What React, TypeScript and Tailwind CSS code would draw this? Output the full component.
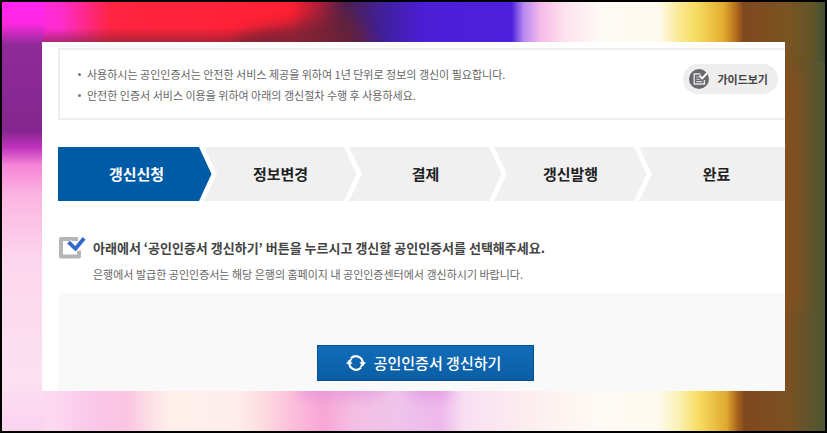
import clsx from 'clsx'
import type { ReactNode } from 'react'

const notices = [
  '사용하시는 공인인증서는 안전한 서비스 제공을 위하여 1년 단위로 정보의 갱신이 필요합니다.',
  '안전한 인증서 서비스 이용을 위하여 아래의 갱신절차 수행 후 사용하세요.',
]

const steps = [
  { label: '갱신신청', className: 'flex-159' },
  { label: '정보변경', className: 'flex-145' },
  { label: '결제', className: 'flex-145' },
  { label: '갱신발행', className: 'flex-145' },
  { label: '완료', className: 'flex-133' },
]

function Stops({ items }: { items: [number, string][] }) {
  return (
    <>
      {items.map(([at, color]) => (
        <stop key={at} offset={at / 827} stopColor={color} />
      ))}
    </>
  )
}

function Backdrop() {
  return (
    <svg className="absolute inset-0 h-full w-full" viewBox="0 0 827 433" preserveAspectRatio="none" aria-hidden="true">
      <defs>
        <linearGradient id="top">
          <Stops
            items={[
              [0, '#ff26f4'], [60, '#ff2ccc'], [110, '#ff2440'], [290, '#ff2032'], [320, '#a82038'], [345, '#4c2050'],
              [385, '#4020a0'], [425, '#4c1ed8'], [512, '#4c20dc'], [524, '#b888f0'], [542, '#f8bcea'], [566, '#fde2ee'],
              [600, '#fefaf5'], [660, '#fefaee'], [682, '#fae88c'], [700, '#f5d95a'], [725, '#e4ac30'], [738, '#b46c1c'],
              [745, '#80481e'], [790, '#7a5422'], [815, '#615528'], [827, '#405034'],
            ]}
          />
        </linearGradient>
        <linearGradient id="bottom">
          <Stops
            items={[
              [0, '#f9cfec'], [50, '#fcd9f1'], [90, '#fac8e8'], [125, '#fbc3e2'], [150, '#fde0e6'], [170, '#ffefeb'],
              [235, '#feeeeb'], [262, '#fddce0'], [290, '#fcc0da'], [322, '#f8a6d6'], [355, '#f4bfe4'], [400, '#eec4ec'],
              [440, '#edb8ec'], [465, '#f9dff2'], [530, '#fceeee'], [600, '#fefaf5'], [660, '#fefaee'], [680, '#faf0b4'],
              [700, '#f8dc62'], [728, '#e0a82e'], [739, '#a8641c'], [746, '#80481e'], [790, '#7c5022'], [827, '#4c5834'],
            ]}
          />
        </linearGradient>
        <linearGradient id="left" x1="0" y1="0" x2="0" y2="1">
          <stop offset="0" stopColor="#ff26f4" />
          <stop offset="0.05" stopColor="#fc28e0" />
          <stop offset="0.1" stopColor="#902a98" />
          <stop offset="0.3" stopColor="#85268e" />
          <stop offset="0.34" stopColor="#c034bc" />
          <stop offset="0.38" stopColor="#f684d6" />
          <stop offset="0.45" stopColor="#fcb4e2" />
          <stop offset="0.6" stopColor="#fcd6ec" />
          <stop offset="0.88" stopColor="#fde0f2" />
          <stop offset="1" stopColor="#fad2ee" />
        </linearGradient>
        <linearGradient id="dusk" x1="0" y1="0" x2="0" y2="1">
          <stop offset="0" stopColor="#742432" stopOpacity="0" />
          <stop offset="1" stopColor="#742432" stopOpacity="0.8" />
        </linearGradient>
        <filter id="soft" x="-50%" y="-100%" width="200%" height="300%">
          <feGaussianBlur stdDeviation="7" />
        </filter>
      </defs>
      <rect width="827" height="433" fill="url(#bottom)" />
      <rect width="827" height="60" fill="url(#top)" />
      <rect width="42" height="433" fill="url(#left)" />
      <path d="M42 26h310v20H42Z" fill="url(#dusk)" />
      <path d="M220 46 250 30 300 20 350 10 375 46Z" fill="#6a2434" opacity="0.7" filter="url(#soft)" />
      <path d="M785 70h22v240h-22Z" fill="#90501c" opacity="0.4" filter="url(#soft)" />
      <path d="M300 380h100l-30 20h-70ZM405 380h45v20h-40Z" fill="#e090dc" opacity="0.6" filter="url(#soft)" />
    </svg>
  )
}

function GuideIcon() {
  return (
    <svg width="20" height="20" viewBox="0 0 20 20" fill="none" aria-hidden="true">
      <circle cx="10" cy="10" r="10" fill="#68696d" />
      <path d="M11.5 5H5.2v10h10.2v-4" stroke="#e4e4e6" strokeWidth="1.4" />
      <path d="M7.2 8h3M7.2 10.3h4M7.2 12.6h6" stroke="#d4d4d6" strokeWidth="1.1" />
      <path d="m10.6 6.6 2.6 2.8 5-5.4" stroke="#fff" strokeWidth="1.9" />
    </svg>
  )
}

function CheckIcon() {
  return (
    <svg width="28" height="24" viewBox="0 0 28 24" fill="none" aria-hidden="true">
      <path d="M20 3H3v17.5h18v-6" stroke="#b5b5b5" strokeWidth="4" strokeLinejoin="round" />
      <path d="m10.5 6.2 7 6.6 8.6-10.6" stroke="#fff" strokeWidth="6" />
      <path d="m10.5 6.2 7 6.6 8.6-10.6" stroke="#3269cc" strokeWidth="3.8" />
    </svg>
  )
}

function RenewIcon() {
  return (
    <svg width="20" height="18" viewBox="0 0 20 18" fill="none" aria-hidden="true">
      <path d="M5 4.2A7 7 0 0 1 16.8 9M15 13.8A7 7 0 0 1 3.2 9" stroke="#fff" strokeWidth="2.2" />
      <path d="M4.2 7.4A7 7 0 0 1 5.6 4.6M15.8 10.6a7 7 0 0 1-1.4 2.8" stroke="#fff" strokeWidth="1.6" />
      <path d="M13.4 8.2H20l-3.2 4.2ZM0 9.8h6.6L3.2 5.6Z" fill="#fff" />
    </svg>
  )
}

function StepArrow({ active }: { active: boolean }) {
  return (
    <svg className="h-full w-[18px] shrink-0 bg-[#f0f0f0]" viewBox="0 0 18 54" preserveAspectRatio="none" aria-hidden="true">
      <path d="M0 0h5l13 27L5 54H0Z" fill="#fff" />
      <path d="M0 0 12.5 27 0 54Z" fill={active ? '#005ba6' : '#f0f0f0'} />
    </svg>
  )
}

function Notice({ children }: { children: ReactNode }) {
  return (
    <li className="flex items-center gap-1.5">
      <span className="size-[3px] rounded-full bg-[#777]" />
      <span>{children}</span>
    </li>
  )
}

export default function App() {
  return (
    <div className="relative min-h-screen border-2 border-black p-10 font-['Noto_Sans_CJK_KR',sans-serif]">
      <Backdrop />
      <main className="relative bg-white pt-[6px] pl-4">
        <section className="flex items-start justify-between border-2 border-r-0 border-[#eee] pt-[14px] pr-[7px] pb-3 pl-[18px]">
          <ul className="text-[11px] leading-[21px] text-[#666]">
            {notices.map((text) => (
              <Notice key={text}>{text}</Notice>
            ))}
          </ul>
          <button type="button" className="flex h-[30px] items-center gap-2 rounded-full bg-[#eee] pr-[10px] pl-[6px] text-[11px] font-bold text-[#444]">
            <GuideIcon />
            가이드보기
          </button>
        </section>

        <ol className="mt-[27px] flex h-[54px] text-[15px] font-bold text-[#222]">
          {steps.map(({ label, className }, i) => (
            <li key={label} aria-current={i === 0 ? 'step' : undefined} className={clsx('flex', className)}>
              <span
                className={clsx(
                  'flex flex-1 items-center justify-center',
                  i === 0 ? 'bg-[#005ba6] pl-4 text-white' : 'bg-[#f0f0f0]',
                  i === steps.length - 1 && 'pr-1',
                )}
              >
                {label}
              </span>
              {i < steps.length - 1 ? <StepArrow active={i === 0} /> : null}
            </li>
          ))}
        </ol>

        <section className="mt-[35px] flex gap-[7px]">
          <CheckIcon />
          <div>
            <h2 className="text-[13px] leading-6 font-bold text-[#444]">
              아래에서 ‘공인인증서 갱신하기’ 버튼을 누르시고 갱신할 공인인증서를 선택해주세요.
            </h2>
            <p className="mt-1 text-[11px] leading-5 text-[#666]">
              은행에서 발급한 공인인증서는 해당 은행의 홈페이지 내 공인인증센터에서 갱신하시기 바랍니다.
            </p>
          </div>
        </section>

        <div className="mt-[9px] flex justify-center bg-[#f9f9f9] pt-[52px] pb-[10px] pl-2">
          <button
            type="button"
            className="flex h-9 items-center gap-2 border border-[#064f90] bg-linear-to-b from-[#116cb8] to-[#0c5ea4] pr-8 pl-7 text-[15px] font-medium text-white"
          >
            <RenewIcon />
            공인인증서 갱신하기
          </button>
        </div>
      </main>
    </div>
  )
}
